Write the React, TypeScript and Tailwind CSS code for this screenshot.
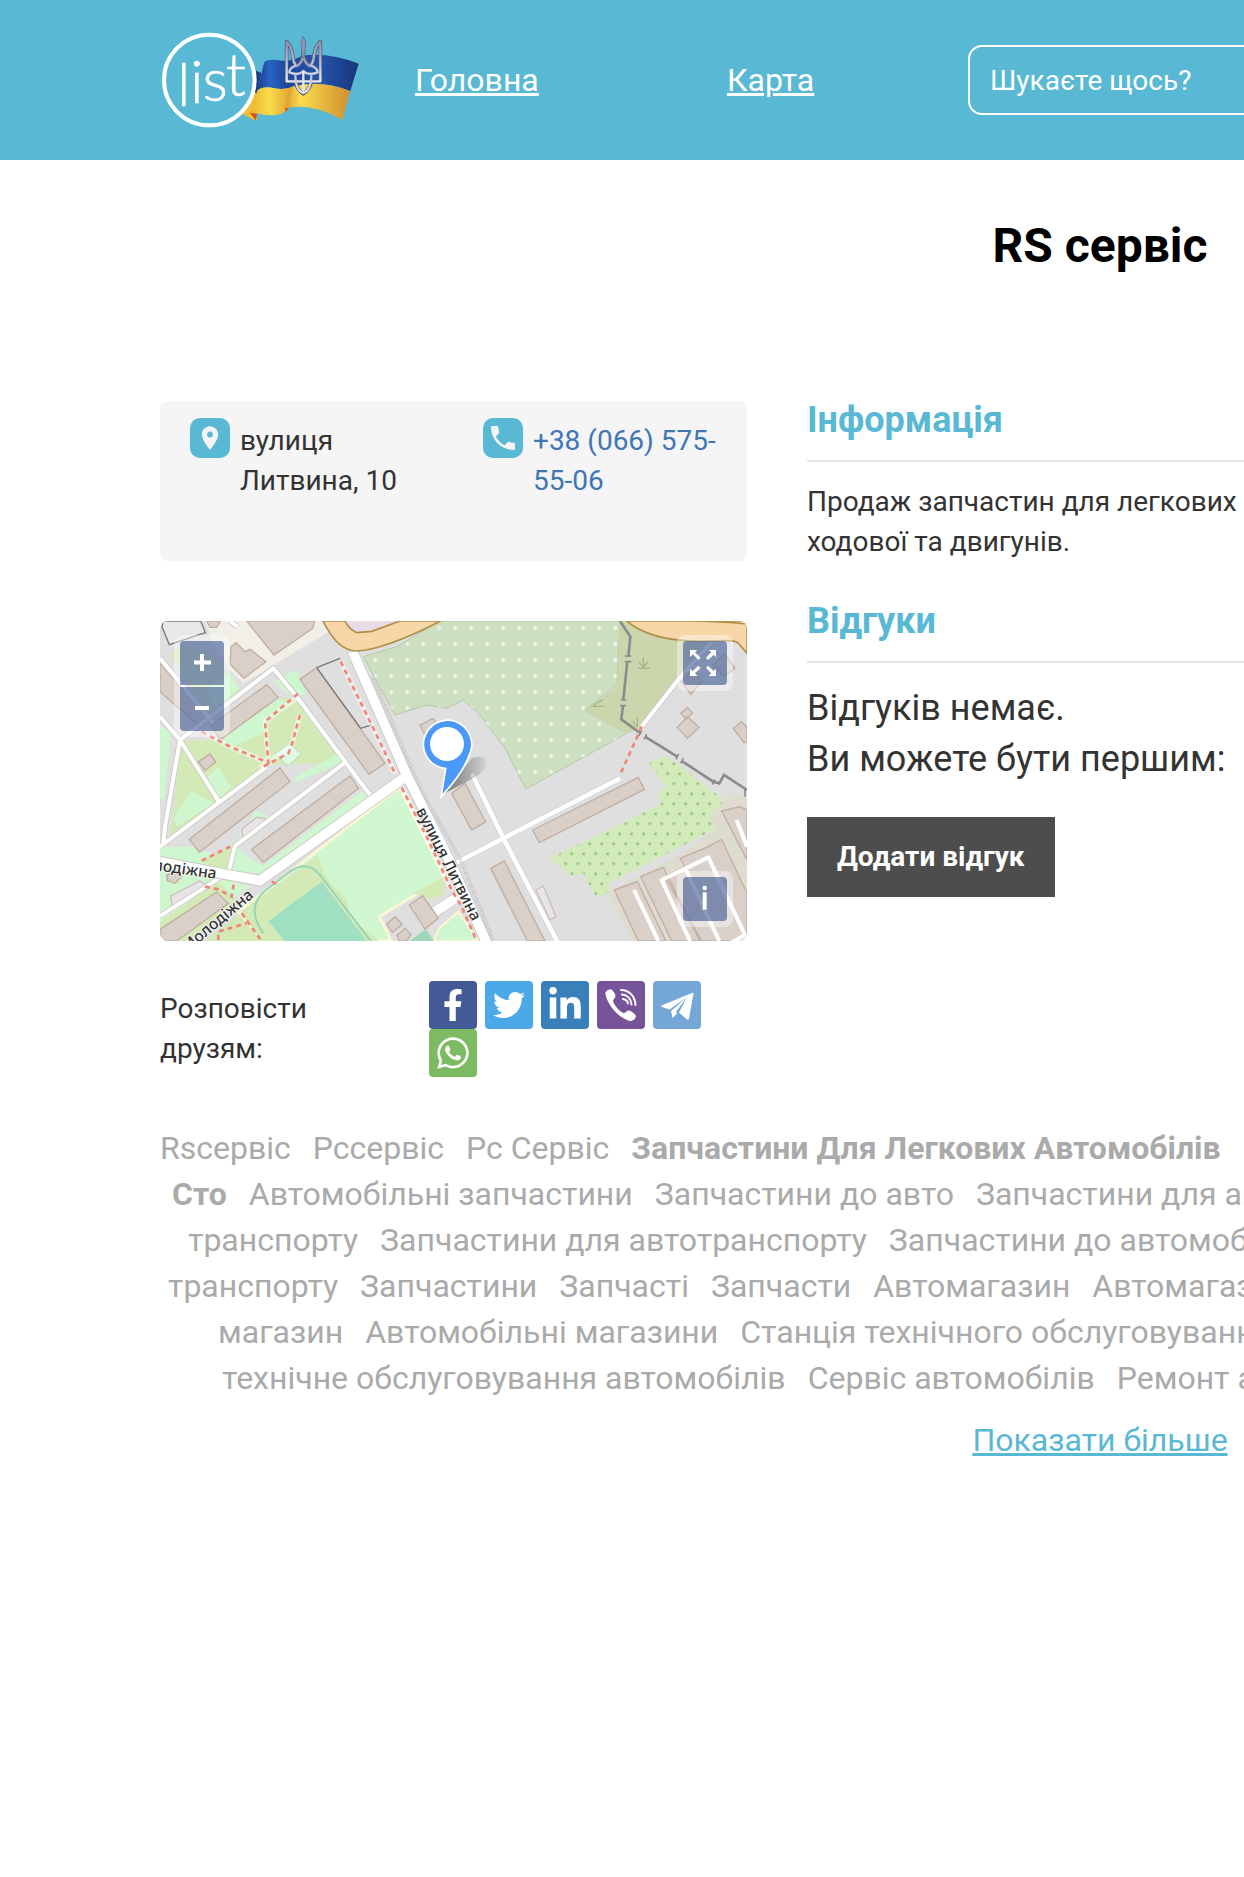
import React from "react";
import { FaFacebookF, FaTwitter, FaLinkedinIn, FaWhatsapp } from "react-icons/fa";
import { MdLocationOn, MdPhone } from "react-icons/md";

type Tag = { text: string; bold?: boolean };

const tagRows: { indent: string; tags: Tag[] }[] = [
  {
    indent: "pl-0",
    tags: [
      { text: "Rsсервіс" },
      { text: "Рссервіс" },
      { text: "Рс Сервіс" },
      { text: "Запчастини Для Легкових Автомобілів", bold: true },
    ],
  },
  {
    indent: "pl-3",
    tags: [
      { text: "Сто", bold: true },
      { text: "Автомобільні запчастини" },
      { text: "Запчастини до авто" },
      { text: "Запчастини для авто" },
    ],
  },
  {
    indent: "pl-7",
    tags: [
      { text: "транспорту" },
      { text: "Запчастини для автотранспорту" },
      { text: "Запчастини до автомобілів" },
    ],
  },
  {
    indent: "pl-2",
    tags: [
      { text: "транспорту" },
      { text: "Запчастини" },
      { text: "Запчасті" },
      { text: "Запчасти" },
      { text: "Автомагазин" },
      { text: "Автомагазини" },
    ],
  },
  {
    indent: "pl-[58px]",
    tags: [
      { text: "магазин" },
      { text: "Автомобільні магазини" },
      { text: "Станція технічного обслуговування" },
    ],
  },
  {
    indent: "pl-[62px]",
    tags: [
      { text: "технічне обслуговування автомобілів" },
      { text: "Сервіс автомобілів" },
      { text: "Ремонт авто" },
    ],
  },
];

function Logo() {
  return (
    <svg viewBox="60 60 600 294" className="h-[98px] w-[200px]" role="img" aria-label="list">
      <defs>
        <linearGradient id="flagBlue" x1="0" x2="1">
          <stop offset="0" stopColor="#173f8c" />
          <stop offset=".12" stopColor="#2a63c4" />
          <stop offset=".3" stopColor="#1c469b" />
          <stop offset=".6" stopColor="#2456ad" />
          <stop offset="1" stopColor="#17357a" />
        </linearGradient>
        <linearGradient id="flagYellow" x1="0" x2="1">
          <stop offset="0" stopColor="#e9b52f" />
          <stop offset=".2" stopColor="#fbdb4b" />
          <stop offset=".38" stopColor="#e3ab35" />
          <stop offset=".5" stopColor="#fbdb4e" />
          <stop offset="1" stopColor="#cf9030" />
        </linearGradient>
        <linearGradient id="silver" x1="0" x2="0" y1="0" y2="1">
          <stop offset="0" stopColor="#8b8fae" />
          <stop offset="1" stopColor="#e3e6f2" />
        </linearGradient>
      </defs>
      <path d="M330 185 L362 192 L352 280 L350 331 L300 305Z" fill="#f0bf35" />
      <path d="M345 178 L364 186 L352 250 L340 240Z" fill="#1b3f85" />
      <path d="M372 155 Q380 144 410 147 Q450 155 485 135 Q560 122 656 158 L631 240 Q540 205 460 226 Q440 238 405 232 Q370 224 352 240Z" fill="url(#flagBlue)" />
      <path d="M352 238 Q368 224 405 232 Q435 238 460 226 Q540 205 631 240 L607 326 Q520 278 445 290 Q430 325 345 306 L330 308Z" fill="url(#flagYellow)" />
      <path d="M330 306 L352 308 L347 328Z M434 292 L446 290 L438 303Z" fill="#cf5420" />
      <path d="M446 238 L434 292 L446 290 Q450 262 460 226Z" fill="#e0a532" opacity=".7" />
      <g fill="none" stroke="#4c5678" strokeWidth="11" strokeLinejoin="round">
        <path d="M440 92 V211 H541 V92 Q524 108 522 135 Q521 152 512 164 Q494 155 490 130 Q486 155 468 164 Q459 152 458 135 Q456 108 440 92Z M466 211 Q470 236 490 248 Q510 236 514 211" />
      </g>
      <g fill="none" stroke="url(#silver)" strokeWidth="7" strokeLinejoin="round">
        <path d="M440 92 V211 H541 V92 Q524 108 522 135 Q521 152 512 164 Q532 170 533 184 Q505 195 490 180 Q475 195 448 184 Q449 170 468 164 Q459 152 458 135 Q456 108 440 92Z" />
        <path d="M490 132 Q486 160 468 166 M490 132 Q494 160 512 166 M466 190 Q466 238 490 246 Q514 238 514 190" />
      </g>
      <path d="M490 180 V244" stroke="#e3e6f2" strokeWidth="7" />
      <path d="M490 76 L497 92 L494 138 H486 L483 92Z" fill="#8f93b0" stroke="#5a6284" strokeWidth="2" />
      <circle cx="208" cy="207" r="136" fill="#59b8d4" stroke="#fff" strokeWidth="12" />
      <text y="286 275 269 256" x="112 151 188 257" fontFamily="Lato" fontWeight="300" fontSize="176" fill="#fff" stroke="#fff" strokeWidth="2">
        list
      </text>
    </svg>
  );
}

function MapDrawing() {
  const b = { fill: "#d9d0c9", stroke: "#c2aea1", strokeWidth: 4 };
  return (
    <svg viewBox="30 33 1761 960" preserveAspectRatio="xMidYMid slice" className="block h-full w-full" aria-hidden="true">
      <defs>
        <pattern id="wood" x="892" y="30" width="48" height="48" patternUnits="userSpaceOnUse">
          <path d="M24 16 L31 24 L24 32 L17 24Z" fill="#f0f1e2" />
        </pattern>
        <pattern id="orchard" x="1517" y="446" width="36" height="60" patternUnits="userSpaceOnUse">
          <circle cx="18" cy="15" r="4.5" fill="#8fc184" />
          <circle cx="0" cy="45" r="4.5" fill="#8fc184" />
          <circle cx="36" cy="45" r="4.5" fill="#8fc184" />
        </pattern>
        <linearGradient id="pinShadow" x1="0" x2="1">
          <stop offset="0" stopColor="#000" stopOpacity=".5" />
          <stop offset="1" stopColor="#000" stopOpacity=".05" />
        </linearGradient>
      </defs>
      <rect x="30" y="33" width="1761" height="960" fill="#dfdfdf" />

      {/* yards and lawns */}
      <path d="M165 33 H530 L545 60 L280 220 L240 180 L185 90Z" fill="#f2efe9" />
      <path d="M62 130 L90 110 L190 130 L270 240 L175 320Z" fill="#d3eab6" />
      <path d="M90 395 L215 385 L300 345 L390 265 L440 265 L580 455 L350 540 L205 565Z" fill="#d3eab6" />
      <path d="M345 465 L580 458 L655 560 L420 720 L160 730 L90 670Z" fill="#dfdfdf" />
      <path d="M372 215 L440 178 L467 250 L430 265Z M200 390 L385 265 L412 275 L345 335 L335 372 L250 407Z M440 500 L575 425 L582 455 L430 520Z M165 240 L240 190 L268 235 L200 290Z" fill="#cff7cf" />
      <path d="M92 410 L205 570 L60 680Z" fill="#d3eab6" />
      <path d="M165 510 L205 468 L242 530 L203 570Z M72 620 L125 542 L192 580 L80 650Z M30 345 L62 370 L42 580 L30 560Z" fill="#cff7cf" />
      <path d="M60 680 L205 572 L300 505 L345 480 L130 690 L150 730 L60 710Z" fill="#dfdfdf" />
      <path d="M30 712 L130 710 L200 735 L260 690 L320 600 L350 620 L640 545 L660 560 L340 795 L30 740Z" fill="#cff7cf" />
      <path d="M262 712 L580 462 L640 540 L340 768 L300 745Z" fill="#dfdfdf" />
      <path d="M155 752 L245 705 L232 778 L190 775Z" fill="#d3eab6" />
      <path d="M30 750 L200 800 L300 830 L180 910 L90 993 H30Z" fill="#cff7cf" />
      <path d="M30 935 L205 815 L260 870 L110 993 H30Z M165 993 L275 905 L340 993Z" fill="#d3eab6" />
      <path d="M375 430 L420 402 L455 432 L413 468Z" fill="#dff8e3" stroke="#aedcb5" strokeWidth="3" />

      {/* sports ground */}
      <path d="M265 905 L460 755 L748 532 L885 800 L688 920 L724 993 H340Z" fill="#d0f7d0" stroke="#fbf7d2" strokeWidth="9" />
      <path d="M272 906 L502 735 L522 790 L545 825 L585 860 L605 930 L680 985 L685 993 H335Z" fill="#d3eab6" />
      <path d="M355 934 L515 815 L650 993 H405Z" fill="#9fdfc2" />
      <path d="M340 970 C300 915 310 870 345 842 L420 785 C455 760 485 765 510 795 L662 993" fill="none" stroke="#95d4b8" strokeWidth="6" />
      <path d="M790 850 L880 800 L885 850 L850 870Z" fill="#d3eab6" />
      <path d="M868 955 L925 905 L985 993 H850Z" fill="#cff7cf" stroke="#fbf7d2" strokeWidth="6" />
      <path d="M780 993 L828 958 L852 993Z" fill="#9dd6b8" />

      {/* woodland, scrub and orchard */}
      <path d="M640 140 L740 110 L870 33 H1410 L1400 225 L1305 300 L1430 370 L1128 537 L1065 415 L985 310 L940 270 L890 295 L830 285 L735 315Z" fill="#cddfc1" stroke="#b2c9a5" strokeWidth="3" />
      <path d="M640 140 L740 110 L870 33 H1410 L1400 225 L1305 300 L1430 370 L1128 537 L1065 415 L985 310 L940 270 L890 295 L830 285 L735 315Z" fill="url(#wood)" />
      <path d="M1408 33 H1440 L1500 75 L1600 92 L1700 100 L1580 215 L1475 352 L1430 372 L1305 300 L1395 235 L1407 150Z" fill="#cbd6ad" />
      <path d="M1480 175 v-32 M1480 173 l-14 -18 M1480 173 l14 -18 M1462 175 h40 M1325 289 h38 M1330 286 l28 -17 M1462 352 v-28 M1462 350 l-14 -16" stroke="#a8b48c" strokeWidth="4" fill="none" />
      <path d="M1370 850 L1590 735 L1700 655 L1680 620 L1745 545 L1791 570 V993 H1450Z" fill="#dedbcf" />
      <path d="M1497 458 L1540 438 L1580 460 L1722 570 L1680 622 L1697 657 L1375 820 L1380 845 L1337 862 L1300 790 L1265 797 L1200 745 L1535 580 L1525 550 L1548 530Z" fill="#d3ebb8" />
      <path d="M1497 458 L1540 438 L1580 460 L1722 570 L1680 622 L1697 657 L1375 820 L1380 845 L1337 862 L1300 790 L1265 797 L1200 745 L1535 580 L1525 550 L1548 530Z" fill="url(#orchard)" />

      {/* buildings */}
      <path d="M36 50 L58 104 L166 68 L152 33 H40Z" fill="#eae8e6" stroke="#777" strokeWidth="4" />
      <g {...b}>
        <path d="M170 33 H212 L200 52 L180 52Z M290 33 H495 L488 55 L372 135Z M243 110 L258 98 L285 125 L300 118 L348 155 L282 205 L240 162Z" />
        <path d="M30 160 L175 330 L150 350 L30 245Z" />
        <path d="M185 345 L350 224 L385 262 L210 390Z M145 455 L180 432 L197 456 L165 482Z" />
        <path d="M118 688 L390 474 L420 515 L148 727Z M305 718 L600 498 L625 535 L340 757Z" />
        <path d="M450 208 L500 173 L705 460 L657 493Z" />
        <path d="M30 958 L200 846 L235 880 L80 993 H30Z M50 795 L85 785 L95 800 L75 820 L52 812Z" />
        <path d="M810 345 L850 325 L865 350 L825 375Z" />
        <path d="M778 885 L818 857 L865 925 L825 957Z M710 942 L735 920 L757 943 L727 967Z M742 975 L765 955 L783 973 L770 993 H747Z" />
        <path d="M905 550 L945 520 L1007 635 L965 660Z M1022 775 L1063 753 L1185 993 H1132Z M1148 660 L1465 502 L1483 538 L1168 698Z" />
        <path d="M1590 210 L1628 180 L1655 215 L1622 253Z M1690 165 L1725 132 L1755 175 L1720 200Z M1593 310 L1612 292 L1628 308 L1608 328Z M1582 352 L1612 320 L1647 352 L1612 385Z M1750 355 L1775 335 L1791 352 V395 L1782 398Z" />
        <path d="M1393 840 L1462 815 L1548 993 H1465Z M1472 800 L1540 772 L1650 993 H1565Z M1590 745 L1670 712 L1715 688 L1791 850 V970 L1750 993 H1655L1545 800 L1605 770Z M1715 603 L1770 590 L1791 600 V750Z" />
      </g>
      <path d="M275 658 L320 622 L345 625 L345 640 L280 690Z M62 858 L150 812 L175 830 L68 895Z M1158 840 L1180 828 L1218 920 L1200 930Z" fill="#e9e5e4" stroke="#c9bfc0" strokeWidth="4" />

      {/* small streets */}
      <g fill="none" stroke="#cbc8c5" strokeWidth="17" strokeLinejoin="round">
        <path d="M30 145 L190 340 M30 320 L90 390 L205 572 M90 390 L370 175 L440 260 L660 555 M90 390 L45 650 L40 700 M30 710 L350 470 M582 460 L255 708 L235 790 M30 918 L215 800 M240 33 L262 50" />
        <path d="M900 768 L1060 685 L1410 505 M965 490 L1060 685 L1225 1000 M1475 350 L1580 215 L1690 90" />
      </g>
      <g fill="none" stroke="#fff" strokeWidth="12" strokeLinejoin="round">
        <path d="M30 145 L190 340 M30 320 L90 390 L205 572 M90 390 L370 175 L440 260 L660 555 M90 390 L45 650 L40 700 M30 710 L350 470 M582 460 L255 708 L235 790 M30 918 L215 800 M240 33 L262 50" />
        <path d="M900 768 L1060 685 L1410 505 M965 490 L1060 685 L1225 1000" strokeWidth="14" />
        <path d="M1475 350 L1580 215 L1690 90 M1452 840 L1525 993 M1620 993 L1535 810 L1675 742 L1785 975 L1740 1000 M1608 780 L1708 993 M1760 630 L1791 710" />
      </g>

      {/* main streets */}
      <path d="M30 755 L210 790 L330 812 L770 498 M608 125 L770 495 L900 755 L1015 1010 M855 905 L940 850" fill="none" stroke="#c9c6c3" strokeWidth="34" strokeLinejoin="round" />
      <path d="M668 200 L815 545 L930 745 L1030 993" fill="none" stroke="#b8b5b2" strokeWidth="12" strokeDasharray="2 5" />
      <path d="M30 755 L210 790 L330 812 L770 498 M608 125 L770 495 L900 755 L1015 1010 M855 905 L940 850" fill="none" stroke="#fff" strokeWidth="29" strokeLinejoin="round" />
      <path d="M585 33 L620 68 L665 64 L750 33Z" fill="#e8dbe5" />
      <path d="M519 33 C550 95 580 122 620 123 C690 120 790 75 872 33 H750 L665 64 L620 68 C600 58 590 45 585 33Z M1430 33 C1480 75 1550 92 1640 93 C1720 93 1755 88 1765 100 L1791 130 V33Z" fill="#f7d6a8" stroke="#b18f47" strokeWidth="5" />
      <path d="M1640 33 L1740 37 L1791 42" fill="none" stroke="#b18f47" strokeWidth="5" />

      {/* fences */}
      <path d="M500 173 L570 145 M500 173 L632 355 L665 345" fill="none" stroke="#777" strokeWidth="4" />
      <g fill="none" stroke="#8c8c8c" strokeWidth="8">
        <path d="M1410 33 L1441 80 L1435 140 M1432 155 L1420 268 M1419 287 L1414 328 L1472 370 M1485 380 L1582 440 M1595 453 L1690 515 L1708 520 L1722 495 L1791 540" />
        <path d="M1424 138 h20 M1424 155 h20 M1412 270 h18 M1410 287 h18 M1475 362 l-8 16 M1490 372 l-8 16 M1586 432 l-8 16 M1600 444 l-8 16 M1695 508 l-8 16 M1785 535 v25" strokeWidth="5" />
      </g>

      {/* footpaths */}
      <path d="M155 365 L240 410 L355 458 L345 335 L445 260 M450 315 L425 405 L330 475 M572 155 L735 490 M755 533 L905 840" fill="none" stroke="#fff" strokeOpacity=".5" strokeWidth="15" />
      <path d="M155 365 L240 410 L355 458 L345 335 L445 250 M450 315 L425 405 L415 430 L330 475 M572 155 L665 345 L735 490 M755 533 L830 680 L905 840 L935 890 L980 993 M155 752 L250 705 M165 830 L205 838 L245 860 L252 815 M275 910 L335 993 M205 990 L205 965 L290 940 M365 815 L380 822 M1475 350 L1410 495" fill="none" stroke="#f0857a" strokeWidth="8" strokeDasharray="15 12" />

      <g fontFamily="Noto Sans, sans-serif" fontWeight="500" fontSize="47" fill="#333" stroke="#fff" strokeOpacity=".7" strokeWidth="6" paintOrder="stroke">
        <text transform="translate(-62 770) rotate(8)">Молодіжна</text>
        <text transform="translate(112 1028) rotate(-40)">Молодіжна</text>
        <text transform="translate(797 602) rotate(63)">вулиця Литвина</text>
      </g>

      {/* marker */}
      <path d="M880 552 L965 445 Q1005 430 1010 460 Q1005 490 960 510Z" fill="url(#pinShadow)" />
      <path d="M877 552 L890 473 A70 70 0 1 1 955 435 Q935 490 877 552Z" fill="#4a98f7" stroke="#fff" strokeWidth="10" paintOrder="stroke" />
      <circle cx="891" cy="402" r="51" fill="#fff" />
    </svg>
  );
}

const mapBtn = "flex h-11 w-11 items-center justify-center bg-[#14347c]/50 text-white";

function MapPanel() {
  return (
    <div className="relative mt-[60px] h-80 overflow-hidden rounded-lg">
      <MapDrawing />
      <div className="absolute left-3.5 top-3.5 flex flex-col gap-0.5 rounded-lg bg-white/40 p-1.5">
        <button aria-label="Збільшити" className={`${mapBtn} rounded-t`}>
          <svg viewBox="0 0 44 44" className="h-11 w-11"><path d="M14 21.5h17M22 13v17" stroke="#fff" strokeWidth="4" /></svg>
        </button>
        <button aria-label="Зменшити" className={`${mapBtn} rounded-b`}>
          <svg viewBox="0 0 44 44" className="h-11 w-11"><path d="M15 21h14" stroke="#fff" strokeWidth="4" /></svg>
        </button>
      </div>
      <div className="absolute right-3.5 top-3.5 rounded-lg bg-white/40 p-1.5">
        <button aria-label="На весь екран" className={`${mapBtn} rounded`}>
          <svg viewBox="0 0 132 132" className="h-11 w-11" fill="#fff">
            <path d="M21 27h22l-7 7 17 16-7 7-16-17-9 8ZM99 27v22l-7-8-17 16-6-7 16-16-8-7ZM21 105V83l8 7 17-16 7 7-17 16 8 8ZM99 105H77l8-8-16-16 6-7 17 16 7-7Z" />
          </svg>
        </button>
      </div>
      <div className="absolute bottom-3.5 right-3.5 rounded-lg bg-white/40 p-1.5">
        <button aria-label="Інформація про карту" className={`${mapBtn} rounded`}>
          <svg viewBox="0 0 132 132" className="h-11 w-11" fill="#fff">
            <rect x="59" y="46" width="12" height="52" />
            <circle cx="65" cy="33" r="7" />
          </svg>
        </button>
      </div>
    </div>
  );
}

function ViberIcon() {
  return (
    <svg viewBox="0 0 48 48" className="h-12 w-12">
      <path d="M8.5 13.5C7.5 11 11 8.5 13.5 8.3C15.5 8.5 18.5 13 18.5 15C18.5 17 16 18 16 20C16.5 23.5 23 31 26.5 32C28.5 32.5 29.5 29.5 31.5 29.5C33.5 29.5 38.5 33 39 35C39 37.5 35.5 40.5 33 40C22 37 11 25 8.5 13.5Z" fill="#fff" />
      <path d="M24 9C32 9 38 15 38.5 24M25 13.5C30.5 14 34 18 34.5 23.5M26 18C29 18.5 30.5 20 31 22.5" fill="none" stroke="#fff" strokeWidth="2" strokeLinecap="round" />
    </svg>
  );
}

function TelegramIcon() {
  return (
    <svg viewBox="0 0 48 48" className="h-12 w-12" fill="#fff">
      <path d="M39 12L8.500 24.5Q8 25.500 9 26L16.5 28.5L34 16L18 30L19.500 37L24 32.5L23 31L34 16L26 31.500L34 38.500Q35.500 39.500 36 37.500L40.500 12.500Q40.500 11.500 39 12Z" />
    </svg>
  );
}

const shares = [
  { name: "Facebook", bg: "bg-[#435a96]", icon: <FaFacebookF size={32} /> },
  { name: "Twitter", bg: "bg-[#4ca9e8]", icon: <FaTwitter size={32} /> },
  { name: "LinkedIn", bg: "bg-[#3980ba]", icon: <FaLinkedinIn size={36} /> },
  { name: "Viber", bg: "bg-[#775499]", icon: <ViberIcon /> },
  { name: "Telegram", bg: "bg-[#74a6d8]", icon: <TelegramIcon /> },
  { name: "WhatsApp", bg: "bg-[#7cbb61]", icon: <FaWhatsapp size={36} /> },
];

const heading = "border-b-2 border-[#e5e5e5] pb-[21px] text-4xl leading-[38px] font-bold text-[#59b8d4]";
const badge = "flex h-10 w-10 shrink-0 items-center justify-center rounded-[10px] bg-[#59b8d4] text-[#f5f5f5]";

export default function App() {
  return (
    <div className="min-h-screen overflow-x-clip bg-white font-['Roboto',sans-serif] text-[28px] leading-10 text-[#333]">
      <div className="min-w-[2200px]">
        <header className="flex h-40 items-center bg-[#59b8d4] px-40 text-[32px] text-white">
          <a href="#home" aria-label="list" className="mr-[55px] shrink-0">
            <Logo />
          </a>
          <nav className="flex w-[553px] shrink-0">
            <a href="#main" className="w-[312px]"><span className="underline">Головна</span></a>
            <a href="#map"><span className="underline">Карта</span></a>
          </nav>
          <input
            aria-label="Пошук"
            placeholder="Шукаєте щось?"
            className="h-[70px] grow rounded-[14px] border-2 border-white bg-transparent px-5 text-[28px] placeholder:text-white"
          />
        </header>

        <main className="px-40">
          <h1 className="pt-14 text-center text-5xl leading-[60px] font-bold text-black">RS сервіс</h1>

          <div className="mt-[125px] flex gap-[60px]">
            <section className="w-[587px] shrink-0">
              <div className="flex h-40 rounded-lg bg-[#f5f5f5] pl-[30px] pt-[17px]">
                <div className="flex w-[293px] shrink-0 gap-2.5">
                  <span className={badge}>
                    <MdLocationOn size={28} />
                  </span>
                  <p className="w-40 pt-[3px]">вулиця Литвина, 10</p>
                </div>
                <div className="flex shrink-0 gap-2.5">
                  <span className={badge}>
                    <MdPhone size={32} />
                  </span>
                  <a href="tel:+380665755506" className="w-[190px] pt-[3px] text-[#3e76b6]">+38 (066) 575-55-06</a>
                </div>
              </div>

              <MapPanel />

              <div className="mt-10 flex">
                <p className="w-[269px] shrink-0 pr-20 pt-2">Розповісти друзям:</p>
                <div className="flex w-[280px] flex-wrap gap-x-2">
                  {shares.map((s) => (
                    <a key={s.name} href={`#${s.name}`} aria-label={s.name} className={`flex h-12 w-12 items-center justify-center rounded text-white ${s.bg}`}>
                      {s.icon}
                    </a>
                  ))}
                </div>
              </div>
            </section>

            <section className="grow">
              <h2 className={heading}>Інформація</h2>
              <p className="mt-5">
                Продаж запчастин для легкових
                <br />
                ходової та двигунів.
              </p>
              <h2 className={`mt-10 ${heading}`}>Відгуки</h2>
              <p className="mt-5 text-4xl leading-[51px]">
                Відгуків немає.
                <br />
                Ви можете бути першим:
              </p>
              <button className="mt-8 h-20 bg-[#4d4d4d] px-[30px] font-bold text-white">Додати відгук</button>
            </section>
          </div>

          <section className="mt-12 text-[32px] leading-[46px] text-[#aaa]">
            {tagRows.map((row, i) => (
              <div key={i} className={`flex gap-[22px] whitespace-nowrap ${row.indent}`}>
                {row.tags.map((t, j) => (
                  <span key={j} className={t.bold ? "font-bold" : ""}>{t.text}</span>
                ))}
              </div>
            ))}
          </section>
          <div className="mt-4 text-center text-[32px] leading-[46px]">
            <a href="#more" className="text-[#59b8d4] underline">Показати більше</a>
          </div>
        </main>
      </div>
    </div>
  );
}
